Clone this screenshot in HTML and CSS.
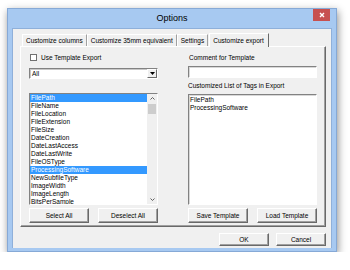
FILE: index.html
```html
<!DOCTYPE html>
<html>
	<head>
		<title>Options</title>
		<link rel="stylesheet" href="styles.css">
	</head>
	<body>
		<div class="window">
			<div class="titlebar">
				<span></span>
				<span class="title">Options</span>
				<span class="close">
					<svg width="6" height="6" viewBox="0 0 6 6"><path d="M1 1 L5 5 M5 1 L1 5" stroke="#fff" stroke-width="1.4"/></svg>
				</span>
			</div>
			<div class="client">
				<div class="tabrow">
					<span class="tab">Customize columns</span>
					<span class="tab">Customize 35mm equivalent</span>
					<span class="tab">Settings</span>
					<span class="tab active">Customize export</span>
				</div>
				<div class="panel">
					<div class="col">
						<label class="check"><span class="box"></span>Use Template Export</label>
						<div class="select">
							<span class="value">All</span>
							<span class="drop">
								<svg width="5" height="3" viewBox="0 0 5 3"><path d="M0 0 H5 L2.5 3 Z" fill="#000"/></svg>
							</span>
						</div>
						<div class="list left-list">
							<div class="items">
								<div class="item sel">FilePath</div>
								<div class="item">FileName</div>
								<div class="item">FileLocation</div>
								<div class="item">FileExtension</div>
								<div class="item">FileSize</div>
								<div class="item">DateCreation</div>
								<div class="item">DateLastAccess</div>
								<div class="item">DateLastWrite</div>
								<div class="item">FileOSType</div>
								<div class="item sel">ProcessingSoftware</div>
								<div class="item">NewSubfileType</div>
								<div class="item">ImageWidth</div>
								<div class="item">ImageLength</div>
								<div class="item">BitsPerSample</div>
							</div>
							<div class="scrollbar">
								<span class="arrow">
									<svg width="5" height="3" viewBox="0 0 5 3"><path d="M0.5 2.5 L2.5 0.5 L4.5 2.5" fill="none" stroke="#606060"/></svg>
								</span>
								<div class="track"><span class="thumb"></span></div>
								<span class="arrow">
									<svg width="5" height="3" viewBox="0 0 5 3"><path d="M0.5 0.5 L2.5 2.5 L4.5 0.5" fill="none" stroke="#606060"/></svg>
								</span>
							</div>
						</div>
						<div class="buttons">
							<button class="btn">Select All</button>
							<button class="btn">Deselect All</button>
						</div>
					</div>
					<div class="col">
						<div class="label center">Comment for Template</div>
						<div class="input"></div>
						<div class="label tags">Customized List of Tags in Export</div>
						<div class="list right-list">
							<div class="items">
								<div class="item">FilePath</div>
								<div class="item">ProcessingSoftware</div>
							</div>
						</div>
						<div class="buttons">
							<button class="btn">Save Template</button>
							<button class="btn">Load Template</button>
						</div>
					</div>
				</div>
				<div class="footer">
					<button class="btn">OK</button>
					<button class="btn">Cancel</button>
				</div>
			</div>
		</div>
	</body>
</html>
```

FILE: styles.css
```css
body {
	margin: 0;
	background-color: #fff;
	font-family: "Liberation Sans", Arial, sans-serif;
	font-size: 6.5px;
	color: #000;
}

.window {
	box-sizing: border-box;
	width: 330px;
	height: 244px;
	margin: 8px 0 0 7px;
	padding: 0 4px 3px 4px;
	background-color: #a7c9f1;
	border: 1px solid #86a9d6;
	box-shadow: 1px 3px 8px rgba(0, 0, 0, 0.45);
	display: flex;
	flex-direction: column;
}

.titlebar {
	height: 19px;
	display: grid;
	grid-template-columns: 1fr auto 1fr;
}

.title {
	font-size: 9px;
	line-height: 18px;
	color: #000;
}

.close {
	justify-self: end;
	width: 17px;
	height: 12px;
	margin-right: 2px;
	background-color: #c75050;
	display: flex;
	align-items: center;
	justify-content: center;
}

.close svg {
	display: block;
}

.client {
	flex: 1;
	background-color: #f0f0f0;
	padding: 3px 5px 0 7px;
	border: 1px solid #8fb0da;
	border-bottom: none;
}

.tabrow {
	height: 14px;
	padding-left: 2px;
	display: flex;
	align-items: flex-end;
}

.tab {
	height: 12px;
	line-height: 12px;
	padding: 0 3px;
	box-sizing: border-box;
	border-left: 1px solid #fff;
	border-top: 1px solid #fff;
	border-right: 1px solid #a0a0a0;
	white-space: nowrap;
}

.tab.active {
	height: 14px;
	line-height: 13px;
	padding: 0 4px 0 3px;
	margin-left: 1px;
	background-color: #f0f0f0;
	border-right-color: #696969;
	margin-bottom: -1px;
	position: relative;
}

.panel {
	box-sizing: border-box;
	height: 181px;
	padding: 7px 8px 3px 8px;
	border: 1px solid;
	border-color: #fff #696969 #696969 #fff;
	box-shadow: inset -1px -1px 0 #a0a0a0;
	display: flex;
	justify-content: space-between;
}

.col {
	width: 129px;
	display: flex;
	flex-direction: column;
}

.check {
	height: 7px;
	margin-bottom: 7px;
	display: flex;
	align-items: center;
	gap: 4px;
	padding-left: 1px;
	line-height: 7px;
}

.box {
	box-sizing: border-box;
	width: 7px;
	height: 7px;
	background-color: #fff;
	border: 1px solid #707070;
}

.select {
	box-sizing: border-box;
	height: 11px;
	margin-bottom: 14px;
	background-color: #fff;
	border: 1px solid;
	border-color: #828282 #fff #fff #828282;
	box-shadow: inset 1px 1px 0 #c8c8c8;
	display: flex;
}

.value {
	flex: 1;
	line-height: 9px;
	padding-left: 2px;
}

.drop {
	box-sizing: border-box;
	width: 10px;
	background-color: #f0f0f0;
	border: 1px solid;
	border-color: #fff #696969 #696969 #fff;
	display: flex;
	align-items: center;
	justify-content: center;
}

.drop svg,
.arrow svg {
	display: block;
}

.list {
	flex: 1;
	box-sizing: border-box;
	background-color: #fff;
	border: 1px solid;
	border-color: #828282 #fff #fff #828282;
	box-shadow: inset 1px 1px 0 #d8d8d8;
	overflow: hidden;
	display: flex;
}

.items {
	flex: 1;
	overflow: hidden;
}

.item {
	height: 8px;
	line-height: 8px;
	padding-left: 1px;
	white-space: nowrap;
}

.item.sel {
	background-color: #3399ff;
	color: #fff;
}

.right-list .items {
	padding-top: 1px;
}

.scrollbar {
	width: 10px;
	background-color: #f0f0f0;
	display: flex;
	flex-direction: column;
}

.arrow {
	height: 9px;
	display: flex;
	align-items: center;
	justify-content: center;
}

.track {
	flex: 1;
	padding: 1px 1px 0 1px;
}

.thumb {
	display: block;
	height: 10px;
	background-color: #cdcdcd;
}

.label {
	height: 8px;
	line-height: 8px;
	white-space: nowrap;
}

.label.center {
	padding-left: 1px;
	margin-bottom: 4px;
}

.input {
	box-sizing: border-box;
	height: 12px;
	background-color: #fff;
	border: 1px solid;
	border-color: #828282 #fff #fff #828282;
	box-shadow: inset 1px 1px 0 #d8d8d8;
}

.label.tags {
	margin-top: 4px;
	margin-bottom: 4px;
}

.buttons {
	margin-top: 3px;
	display: flex;
	justify-content: space-between;
}

.btn {
	box-sizing: border-box;
	height: 15px;
	width: 60px;
	padding: 0;
	font-family: inherit;
	font-size: 6.5px;
	color: #000;
	background-color: #f0f0f0;
	border: 1px solid;
	border-color: #fff #696969 #696969 #fff;
	box-shadow: inset -1px -1px 0 #a0a0a0;
}

.footer {
	margin-top: 6px;
	display: flex;
	justify-content: flex-end;
	gap: 7px;
}

.footer .btn {
	width: 50px;
	height: 13px;
}
```
